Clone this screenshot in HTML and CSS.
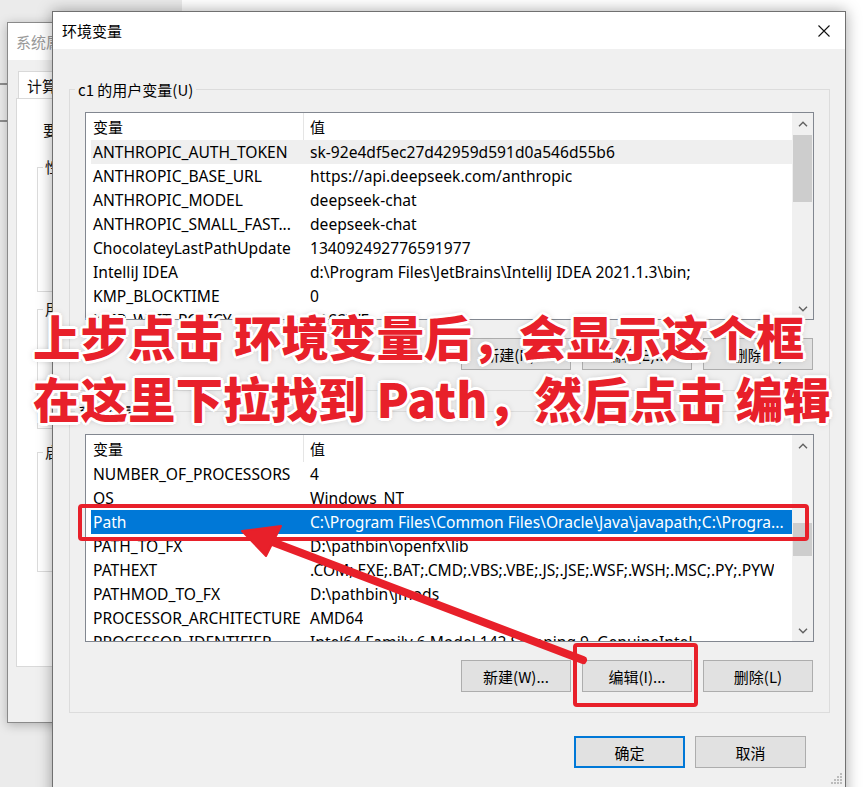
FILE: index.html
```html
<!DOCTYPE html>
<html lang="zh-CN">
<head>
<meta charset="utf-8">
<title>环境变量</title>
<link rel="stylesheet" href="styles.css">
</head>
<body>
<div class="desk">
  <div class="farwin"><span class="mark m1"></span><span class="mark m2"></span></div>

  <div class="bgwin">
    <div class="bg-title">系统属性</div>
    <div class="bg-body">
      <div class="bg-tabs"><span class="bg-tab">计算机名</span></div>
      <div class="bg-panel">
        <div class="bg-text">要进行大多数更改，你必须作为管理员登录。</div>
        <div class="bg-group g1"><span class="bg-legend">性能</span></div>
        <div class="bg-group g2"><span class="bg-legend">用户配置文件</span></div>
        <div class="bg-group g3"><span class="bg-legend">启动和故障恢复</span></div>
      </div>
    </div>
  </div>

  <div class="dialog">
    <div class="titlebar">
      <span class="title">环境变量</span>
      <svg class="close" width="12" height="12" viewBox="0 0 12 12"><path d="M0.5 0.5 L11.5 11.5 M11.5 0.5 L0.5 11.5" stroke="#111" stroke-width="1.1" fill="none"/></svg>
    </div>
    <div class="dbody">
      <div class="group">
        <span class="legend">c1 的用户变量(U)</span>
        <div class="list">
          <div class="list-inner">
            <div class="hdr"><span class="c1">变量</span><span class="c2">值</span></div>
            <div class="row hover"><span class="c1">ANTHROPIC_AUTH_TOKEN</span><span class="c2">sk-92e4df5ec27d42959d591d0a546d55b6</span></div>
            <div class="row"><span class="c1">ANTHROPIC_BASE_URL</span><span class="c2">https://api.deepseek.com/anthropic</span></div>
            <div class="row"><span class="c1">ANTHROPIC_MODEL</span><span class="c2">deepseek-chat</span></div>
            <div class="row"><span class="c1">ANTHROPIC_SMALL_FAST...</span><span class="c2">deepseek-chat</span></div>
            <div class="row"><span class="c1">ChocolateyLastPathUpdate</span><span class="c2">134092492776591977</span></div>
            <div class="row"><span class="c1">IntelliJ IDEA</span><span class="c2">d:\Program Files\JetBrains\IntelliJ IDEA 2021.1.3\bin;</span></div>
            <div class="row"><span class="c1">KMP_BLOCKTIME</span><span class="c2">0</span></div>
            <div class="row"><span class="c1">KMP_WAIT_POLICY</span><span class="c2">PASSIVE</span></div>
          </div>
          <div class="sb">
            <div class="sb-btn"><svg width="10" height="6" viewBox="0 0 10 6"><path d="M1 5.2 L5 1.2 L9 5.2" stroke="#606060" stroke-width="1.4" fill="none"/></svg></div>
            <div class="sb-track"><div class="thumb t1"></div></div>
            <div class="sb-btn"><svg width="10" height="6" viewBox="0 0 10 6"><path d="M1 0.8 L5 4.8 L9 0.8" stroke="#606060" stroke-width="1.4" fill="none"/></svg></div>
          </div>
        </div>
        <div class="btns">
          <button class="btn">新建(N)...</button>
          <button class="btn">编辑(E)...</button>
          <button class="btn">删除(D)</button>
        </div>
      </div>

      <div class="group g-sys">
        <span class="legend">系统变量(S)</span>
        <div class="list">
          <div class="list-inner">
            <div class="hdr"><span class="c1">变量</span><span class="c2">值</span></div>
            <div class="row"><span class="c1">NUMBER_OF_PROCESSORS</span><span class="c2">4</span></div>
            <div class="row"><span class="c1">OS</span><span class="c2">Windows_NT</span></div>
            <div class="row sel"><span class="c1">Path</span><span class="c2">C:\Program Files\Common Files\Oracle\Java\javapath;C:\Progra...</span></div>
            <div class="row"><span class="c1">PATH_TO_FX</span><span class="c2">D:\pathbin\openfx\lib</span></div>
            <div class="row"><span class="c1">PATHEXT</span><span class="c2">.COM;.EXE;.BAT;.CMD;.VBS;.VBE;.JS;.JSE;.WSF;.WSH;.MSC;.PY;.PYW</span></div>
            <div class="row"><span class="c1">PATHMOD_TO_FX</span><span class="c2">D:\pathbin\jmods</span></div>
            <div class="row"><span class="c1">PROCESSOR_ARCHITECTURE</span><span class="c2">AMD64</span></div>
            <div class="row"><span class="c1">PROCESSOR_IDENTIFIER</span><span class="c2">Intel64 Family 6 Model 142 Stepping 9, GenuineIntel</span></div>
          </div>
          <div class="sb">
            <div class="sb-btn"><svg width="10" height="6" viewBox="0 0 10 6"><path d="M1 5.2 L5 1.2 L9 5.2" stroke="#606060" stroke-width="1.4" fill="none"/></svg></div>
            <div class="sb-track"><div class="thumb t2"></div></div>
            <div class="sb-btn"><svg width="10" height="6" viewBox="0 0 10 6"><path d="M1 0.8 L5 4.8 L9 0.8" stroke="#606060" stroke-width="1.4" fill="none"/></svg></div>
          </div>
        </div>
        <div class="btns">
          <button class="btn">新建(W)...</button>
          <button class="btn">编辑(I)...</button>
          <button class="btn">删除(L)</button>
        </div>
      </div>

      <div class="footer">
        <button class="btn wide default">确定</button>
        <button class="btn wide">取消</button>
      </div>
    </div>
    <svg class="grip" width="12" height="12" viewBox="0 0 12 12">
      <rect x="9" y="0" width="2" height="2" fill="#bcbcbc"/>
      <rect x="6" y="3" width="2" height="2" fill="#bcbcbc"/>
      <rect x="9" y="3" width="2" height="2" fill="#bcbcbc"/>
      <rect x="3" y="6" width="2" height="2" fill="#bcbcbc"/>
      <rect x="6" y="6" width="2" height="2" fill="#bcbcbc"/>
      <rect x="9" y="6" width="2" height="2" fill="#bcbcbc"/>
      <rect x="0" y="9" width="2" height="2" fill="#bcbcbc"/>
      <rect x="3" y="9" width="2" height="2" fill="#bcbcbc"/>
      <rect x="6" y="9" width="2" height="2" fill="#bcbcbc"/>
      <rect x="9" y="9" width="2" height="2" fill="#bcbcbc"/>
    </svg>
  </div>

  <svg class="anno" width="867" height="787" viewBox="0 0 867 787">
    <rect x="80" y="506" width="727" height="33" rx="2" fill="none" stroke="#e8202a" stroke-width="4"/>
    <rect x="575" y="645" width="121" height="60" rx="2" fill="none" stroke="#e8202a" stroke-width="4"/>
    <line x1="583" y1="660" x2="262" y2="538" stroke="#e8202a" stroke-width="8" stroke-linecap="round"/>
    <polygon points="242,531 281,526 266,556" fill="#e8202a" stroke="#e8202a" stroke-width="2" stroke-linejoin="round"/>
  </svg>

  <div class="note">
    <div class="note-line">上步点击 环境变量后，会显示这个框</div>
    <div class="note-line">在这里下拉找到 Path，然后点击 编辑</div>
  </div>
</div>
</body>
</html>
```

FILE: styles.css
```css
* { box-sizing: border-box; }
html, body { margin: 0; padding: 0; }
body {
  width: 867px;
  height: 787px;
  overflow: hidden;
  background: #ffffff;
  font-family: "Noto Sans", "Noto Sans CJK SC", sans-serif;
}
.desk { position: relative; width: 867px; height: 787px; overflow: hidden; }

/* far background window */
.farwin {
  position: absolute; left: 0; top: 0; width: 182px; height: 787px;
  background: #ebebeb;
}
.mark { position: absolute; left: 0; width: 8px; height: 2px; background: #8d8d8d; }
.m1 { top: 83px; }
.m2 { top: 120px; }

/* 系统属性 window behind */
.bgwin {
  position: absolute; left: 7px; top: 22px; width: 320px; height: 701px;
  border: 1px solid #8a8a8a;
  background: #f0f0f0;
  box-shadow: 0 2px 10px rgba(0,0,0,.25);
  font-family: "Noto Sans CJK SC", sans-serif;
}
.bg-title {
  height: 37px; background: #fff; padding-left: 8px;
  display: flex; align-items: center;
  font-size: 15px; color: #9a9a9a;
}
.bg-body { padding: 11px 0 0 8px; }
.bg-tabs { display: flex; padding-left: 2px; }
.bg-tab {
  height: 27px; padding: 0 8px; background: #fff;
  border: 1px solid #d9d9d9; border-bottom: none;
  font-size: 15px; color: #111; display: flex; align-items: center;
}
.bg-panel {
  height: 569px; background: #fff; border: 1px solid #d9d9d9;
  padding: 20px 0 0 20px;
}
.bg-text { font-size: 15px; color: #111; padding-left: 6px; line-height: 22px; white-space: nowrap; }
.bg-group { position: relative; border: 1px solid #dcdcdc; width: 260px; }
.bg-legend {
  position: absolute; top: -11px; left: 5px; padding: 0 2px; background: #fff;
  font-size: 15px; line-height: 20px; color: #111; white-space: nowrap;
}
.g1 { margin-top: 26px; height: 125px; }
.g2 { margin-top: 17px; height: 120px; }
.g3 { margin-top: 23px; height: 120px; }

/* main dialog */
.dialog {
  position: absolute; left: 52px; top: 11px; width: 794px; height: 800px;
  border: 1px solid #707070;
  background: #f0f0f0;
  box-shadow: 0 0 14px rgba(0,0,0,.35);
  font-family: "Noto Sans CJK SC", sans-serif;
}
.titlebar {
  height: 37px; background: #fff;
  display: flex; align-items: center; padding-left: 9px; padding-right: 15px;
}
.title { font-size: 15px; color: #000; }
.close { margin-left: auto; }
.dbody { padding: 40px 15px 0 16px; }

.group {
  position: relative;
  border: 1px solid #dcdcdc;
  padding: 22px 15px 20px 15px;
}
.g-sys { margin-top: 20px; }
.legend {
  position: absolute; top: -10px; left: 5px; padding: 0 3px;
  background: #f0f0f0; font-size: 15px; line-height: 20px; color: #000;
}

.list {
  height: 208px; background: #fff; border: 1px solid #828790;
  display: flex; overflow: hidden;
}
.list-inner { flex: 1; min-width: 0; padding-left: 5px; overflow: hidden; }
.hdr { height: 27px; display: flex; align-items: center; font-size: 15px; }
.hdr .c1 { height: 27px; display: flex; align-items: center; }
.row {
  height: 24px; display: flex; align-items: center;
  font-family: "Noto Sans", sans-serif; font-size: 15.6px; color: #000;
  white-space: nowrap;
}
.c1 { width: 213px; flex: none; padding-left: 2px; overflow: hidden; white-space: nowrap; }
.hdr .c1 { border-right: 1px solid #e5e5e5; }
.c2 { padding-left: 6px; overflow: hidden; white-space: nowrap; }
.row.hover { background: #efefef; }
.row.sel { background: #0078d7; color: #fff; }

.sb { width: 21px; flex: none; background: #f0f0f0; display: flex; flex-direction: column; }
.sb-btn { height: 21px; display: flex; align-items: center; justify-content: center; flex: none; }
.sb-track { flex: 1; position: relative; }
.thumb { position: absolute; left: 1px; right: 1px; background: #cdcdcd; }
.t1 { top: 1px; height: 67px; }
.t2 { top: 67px; height: 33px; }

.btns { display: flex; justify-content: flex-end; gap: 11px; margin-top: 18px; padding-right: 1px; }
.btn {
  width: 110px; height: 32px; margin: 0;
  background: #e1e1e1; border: 1px solid #adadad; border-radius: 0;
  font-family: "Noto Sans CJK SC", sans-serif; font-size: 15px; color: #000;
  padding: 0; display: flex; align-items: center; justify-content: center;
}
.footer { display: flex; justify-content: flex-end; gap: 10px; margin-top: 23px; padding-right: 24px; }
.btn.wide { width: 111px; }
.btn.default { border: 2px solid #0078d7; }

.grip { position: absolute; left: 778px; top: 761px; }

/* annotations */
.anno { position: absolute; left: 0; top: 0; pointer-events: none; }
.note {
  position: absolute; left: 33px; top: 305px;
  font-family: "Noto Sans CJK SC", sans-serif; font-weight: 900;
  font-size: 47.5px; line-height: 62px; color: #e8202a;
  white-space: nowrap;
  text-shadow:
    2px 2px 0 #fff, -2px -2px 0 #fff, 2px -2px 0 #fff, -2px 2px 0 #fff,
    3px 0 0 #fff, -3px 0 0 #fff, 0 3px 0 #fff, 0 -3px 0 #fff,
    0 0 7px rgba(0,0,0,.35);
}
```
